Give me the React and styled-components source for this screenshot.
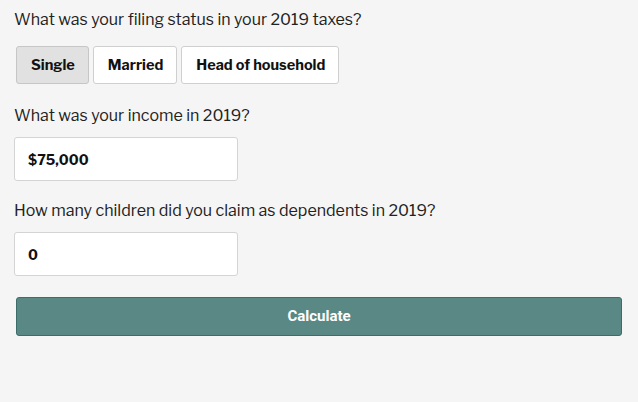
import React, { useState } from 'react';
import styled, { createGlobalStyle } from 'styled-components';

const GlobalStyle = createGlobalStyle`
  body {
    margin: 0;
    background: #f5f5f5;
    font-family: "Libre Franklin", Roboto, "Liberation Sans", sans-serif;
    color: #222;
  }
`;

const statuses = ['Single', 'Married', 'Head of household'];

const App = () => {
  const [status, setStatus] = useState('Single');
  const [income, setIncome] = useState('$75,000');
  const [children, setChildren] = useState('0');

  return (
    <>
      <GlobalStyle />
      <Form onSubmit={(e) => e.preventDefault()}>
        <Question>
          <Label>What was your filing status in your 2019 taxes?</Label>
          <Choices>
            {statuses.map((s) => (
              <Choice
                key={s}
                type="button"
                $active={status === s}
                onClick={() => setStatus(s)}
              >
                {s}
              </Choice>
            ))}
          </Choices>
        </Question>

        <Question>
          <Label>What was your income in 2019?</Label>
          <Field value={income} onChange={(e) => setIncome(e.target.value)} />
        </Question>

        <Question>
          <Label>How many children did you claim as dependents in 2019?</Label>
          <Field value={children} onChange={(e) => setChildren(e.target.value)} />
        </Question>

        <Submit type="submit">Calculate</Submit>
      </Form>
    </>
  );
};

const Form = styled.form`
  display: flex;
  flex-direction: column;
  padding: 9px 16px 0 14px;
  width: 638px;
  height: 402px;
  box-sizing: border-box;
`;

const Question = styled.div`
  display: flex;
  flex-direction: column;
  margin-bottom: 19px;
`;

const Label = styled.div`
  font-size: 16px;
  line-height: 22px;
  color: #222;
  margin-bottom: 10px;
`;

const Choices = styled.div`
  display: flex;
  gap: 4px;
  margin: 5px 0 2px 2px;
`;

const Choice = styled.button`
  height: 38px;
  padding: 0 13px 0 14px;
  border: 1px solid ${(p) => (p.$active ? '#c6c6c6' : '#cfcfcf')};
  border-radius: 3px;
  background: ${(p) => (p.$active ? '#e1e1e1' : '#fff')};
  font-family: "Libre Franklin", "Liberation Sans", sans-serif;
  font-weight: 700;
  font-size: 14.5px;
  color: #111;
  cursor: pointer;
`;

const Field = styled.input`
  width: 224px;
  height: 44px;
  box-sizing: border-box;
  padding: 0 13px;
  border: 1px solid #d4d4d4;
  border-radius: 3px;
  background: #fff;
  font-family: "Libre Franklin", "Liberation Sans", sans-serif;
  font-weight: 700;
  font-size: 14px;
  color: #111;
  outline: none;
`;

const Submit = styled.button`
  margin: 2px 0 0 2px;
  height: 39px;
  padding-bottom: 3px;
  border: 1px solid #3d6d69;
  border-radius: 3px;
  background: #5a8884;
  color: #fff;
  font-family: Roboto, "Liberation Sans", sans-serif;
  font-weight: 700;
  font-size: 15px;
  cursor: pointer;
`;

export default App;
